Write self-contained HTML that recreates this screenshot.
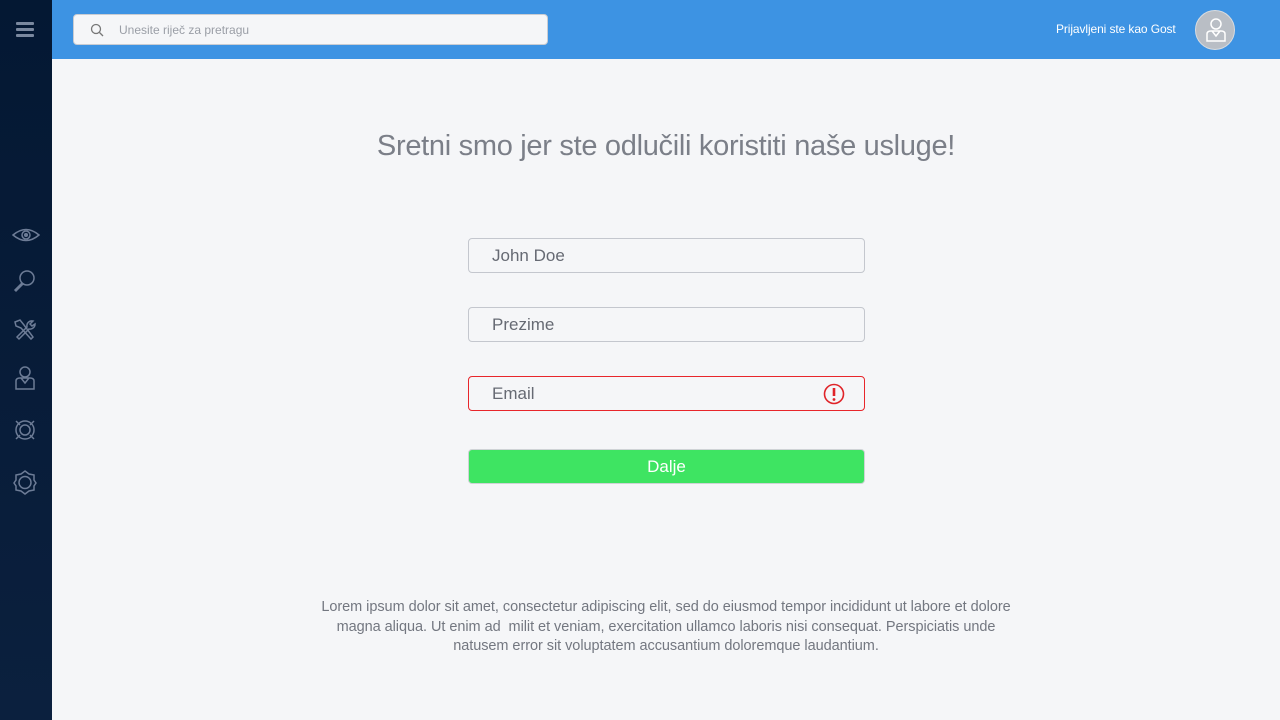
<!DOCTYPE html>
<html><head><meta charset="utf-8"><style>
*{margin:0;padding:0;box-sizing:border-box}
body{width:1280px;height:720px;overflow:hidden;background:#f5f6f8;font-family:"Liberation Sans",sans-serif;position:relative}
.side{position:absolute;left:0;top:0;width:52px;height:720px;background:linear-gradient(#041833,#0b203e)}
.top{position:absolute;left:52px;top:0;width:1228px;height:59px;background:#3d93e3}
.search{position:absolute;left:21px;top:14px;width:475px;height:31px;background:#f5f6f8;border:1px solid #c9ccd2;border-radius:4px}
.search span{position:absolute;left:45px;top:8px;font-size:12px;color:#9a9ea6}
.user{position:absolute;left:1004px;top:22px;color:#fff;font-size:12px;letter-spacing:-0.1px}
.av{position:absolute;left:1143px;top:10px;width:40px;height:40px;border-radius:50%;background:#b9bec5;border:1px solid #d9dce0}
h1{position:absolute;left:52px;width:1228px;top:130px;text-align:center;font-weight:300;font-size:29px;color:#7b7f88;letter-spacing:-0.3px}
.in{position:absolute;left:468px;width:397px;height:35px;border:1px solid #c4c7ce;border-radius:4px;font-size:17px;color:#666a73;padding:7px 0 0 23px}
.btn{position:absolute;left:468px;top:449px;width:397px;height:35px;background:#3ee462;border:1px solid #cfd3d6;border-radius:4px;color:#fff;font-size:17px;text-align:center;padding-top:7px}
p{position:absolute;left:52px;width:1228px;top:598px;text-align:center;font-size:14.5px;line-height:19.5px;color:#737780;letter-spacing:-0.05px}
svg.ic{position:absolute;left:12px}
</style></head><body>
<div class="side">
<svg style="position:absolute;left:16px;top:22px" width="19" height="16"><rect y="0" width="18" height="3" rx="1" fill="#7a889f"/><rect y="6" width="18" height="3" rx="1" fill="#7a889f"/><rect y="12" width="18" height="3" rx="1" fill="#7a889f"/></svg>
<svg class="ic" style="top:224px" width="28" height="22" fill="none" stroke="#6d7c96" stroke-width="1.5"><path d="M1 11 Q14 0 27 11 Q14 22 1 11Z"/><circle cx="14" cy="11" r="4"/><circle cx="14" cy="11" r="1.3" fill="#6d7c96"/></svg>
<svg class="ic" style="top:268px" width="26" height="26" fill="none" stroke="#6d7c96" stroke-width="1.5"><circle cx="15" cy="10" r="7"/><path d="M10 15 L3 22 L4 23 L11 16"/></svg>
<svg class="ic" style="top:318px" width="26" height="26" fill="none" stroke="#6d7c96" stroke-width="1.5"><path d="M3 4 L8 2 L12 7 L21 19 L19 21 L9 10 L4 8Z"/><path d="M21 3 A5 5 0 0 0 15 9 L5 19 L7 21 L17 11 A5 5 0 0 0 23 6 L20 8 L18 6Z"/></svg>
<svg class="ic" style="top:365px" width="26" height="26" fill="none" stroke="#6d7c96" stroke-width="1.5"><circle cx="13" cy="7" r="5"/><path d="M4 24 V16 Q4 13 8 13 H18 Q22 13 22 16 V24Z M9 13 L13 18 L17 13"/></svg>
<svg class="ic" style="top:418px" width="26" height="26" fill="none" stroke="#6d7c96" stroke-width="1.5"><circle cx="13" cy="12" r="9"/><circle cx="13" cy="12" r="5"/><path d="M4 3 L8 7 M22 3 L18 7 M4 21 L8 17 M22 21 L18 17"/></svg>
<svg class="ic" style="top:470px" width="26" height="26" fill="none" stroke="#6d7c96" stroke-width="1.5"><path d="M13 1 L17 4 L22 5 L22 10 L24 13 L22 16 L22 20 L17 21 L13 24 L9 21 L4 20 L4 16 L2 13 L4 10 L4 5 L9 4Z"/><circle cx="13" cy="12.5" r="6"/></svg>
</div>
<div class="top">
<div class="search"><svg style="position:absolute;left:16px;top:8px" width="14" height="14" fill="none" stroke="#777" stroke-width="1.3"><circle cx="6" cy="6" r="4.5"/><path d="M9.5 9.5 L13 13"/></svg><span>Unesite riječ za pretragu</span></div>
<div class="user">Prijavljeni ste kao Gost</div>
<div class="av"><svg style="position:absolute;left:9px;top:6px" width="22" height="26" fill="none" stroke="#fff" stroke-width="1.5"><circle cx="11" cy="7" r="5"/><path d="M2 24 V17 Q2 14 6 14 H16 Q20 14 20 17 V24Z M7 14 L11 19 L15 14"/></svg></div>
</div>
<h1>Sretni smo jer ste odlučili koristiti naše usluge!</h1>
<div class="in" style="top:238px">John Doe</div>
<div class="in" style="top:307px">Prezime</div>
<div class="in" style="top:376px;border-color:#e8262b">Email<svg style="position:absolute;left:354px;top:6px" width="22" height="22" fill="none" stroke="#e02328" stroke-width="1.6"><circle cx="11" cy="11" r="9.5"/><path d="M11 5 V13" stroke-width="2.6"/><circle cx="11" cy="16.5" r="1.4" fill="#e02328" stroke="none"/></svg></div>
<div class="btn">Dalje</div>
<p>Lorem ipsum dolor sit amet, consectetur adipiscing elit, sed do eiusmod tempor incididunt ut labore et dolore<br>magna aliqua. Ut enim ad &nbsp;milit et veniam, exercitation ullamco laboris nisi consequat. Perspiciatis unde<br>natusem error sit voluptatem accusantium doloremque laudantium.</p>
</body></html>
